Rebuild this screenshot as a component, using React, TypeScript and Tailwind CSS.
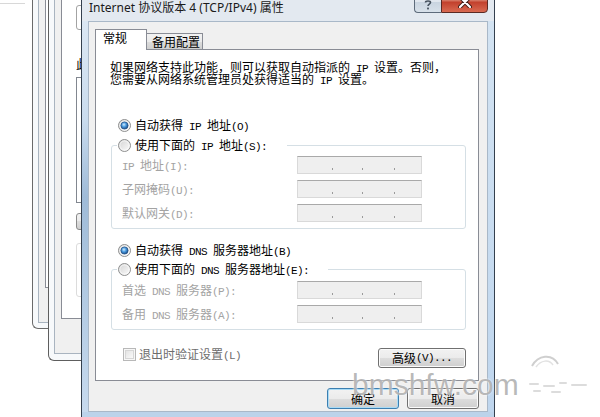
import React from "react";

// ASCII runs are drawn half-width in a mono face, the way the system font sets them
const Txt = ({ s }: { s: string }) => (
  <>
    {s.split(/([\x20-\x7e]+)/).map((part, i) =>
      i % 2 ? (
        <span key={i} className="font-['Liberation_Mono',monospace] text-[11px] leading-[0px] tracking-[-0.6px]">
          {part}
        </span>
      ) : (
        part
      )
    )}
  </>
);

const Radio = ({ on }: { on?: boolean }) => (
  <svg width="13" height="13" viewBox="0 0 13 13" className="shrink-0">
    <circle cx="6.5" cy="6.5" r="6" fill="url(#radioFace)" stroke="#8e8f8f" />
    <circle cx="6.5" cy="6.5" r="4.6" fill="none" stroke="#ffffff" strokeOpacity="0.6" />
    {on && <circle cx="6.5" cy="6.5" r="3.6" fill="url(#radioDot)" stroke="#1b4c84" strokeWidth="0.7" />}
  </svg>
);

const CheckBox = () => (
  <svg width="13" height="13" viewBox="0 0 13 13" className="shrink-0">
    <rect x="0.5" y="0.5" width="12" height="12" fill="#f7f7f7" stroke="#b8b8b8" />
    <rect x="2.5" y="2.5" width="8" height="8" fill="url(#checkFace)" stroke="#d6d6d6" />
  </svg>
);

const RadioRow = ({ on, label }: { on?: boolean; label: string }) => (
  <div className="flex h-4 items-center gap-[4px] leading-[16px] text-black">
    <Radio on={on} />
    <span className="whitespace-nowrap">
      <Txt s={label} />
    </span>
  </div>
);

// disabled four-part address box
const IpBox = () => (
  <div className="flex h-[18px] w-[125px] items-start border border-[#d9d9d9] border-t-[#a9a9a9] bg-[#efefef] pt-[11px]">
    <span className="w-[34px]" />
    <span className="h-[2px] w-px bg-[#9a9a9a]" />
    <span className="w-[29px]" />
    <span className="h-[2px] w-px bg-[#9a9a9a]" />
    <span className="w-[31px]" />
    <span className="h-[2px] w-px bg-[#9a9a9a]" />
  </div>
);

const IpRow = ({ label }: { label: string }) => (
  <div className="flex h-[18px] items-center">
    <span className="w-[175px] whitespace-nowrap leading-[16px] text-[#a3a3a3]">
      <Txt s={label} />
    </span>
    <IpBox />
  </div>
);

const Group = ({ label, pr, rowsTop, children }: { label: string; pr: string; rowsTop: string; children: React.ReactNode }) => (
  <div className="w-[355px] rounded-[3px] border border-[#d5dfe5] pb-[6px]">
    <div className={`-mt-[9px] ml-[5px] w-fit bg-white pl-px ${pr}`}>
      <RadioRow label={label} />
    </div>
    <div className={`flex flex-col gap-[6px] pl-[10px] ${rowsTop}`}>{children}</div>
  </div>
);

const btn =
  "flex items-center justify-center rounded-[3px] border leading-none text-black bg-[linear-gradient(#f2f2f2,#ebebeb_50%,#dddddd_50%,#cfcfcf)]";

export default function App() {
  return (
    <div className="relative h-[417px] w-[600px] overflow-hidden bg-white font-['Noto_Sans_CJK_SC',sans-serif] text-[12px]">
      <svg width="0" height="0" className="absolute">
        <defs>
          <linearGradient id="radioFace" x1="0" y1="0" x2="1" y2="1">
            <stop offset="0" stopColor="#d2d2d2" />
            <stop offset="1" stopColor="#fdfdfd" />
          </linearGradient>
          <radialGradient id="radioDot" cx="0.42" cy="0.38" r="0.65">
            <stop offset="0" stopColor="#d4ecfc" />
            <stop offset="0.45" stopColor="#4b9de2" />
            <stop offset="1" stopColor="#19477f" />
          </radialGradient>
          <linearGradient id="checkFace" x1="0" y1="0" x2="1" y2="1">
            <stop offset="0" stopColor="#e2e2e2" />
            <stop offset="1" stopColor="#fbfbfb" />
          </linearGradient>
        </defs>
      </svg>

      <div className="absolute left-0 top-[3px] h-px w-[25px] bg-[#d8d8d8]" />

      {/* rear window */}
      <div className="absolute left-[32px] top-[-20px] h-[349px] w-[160px] rounded-bl-[6px] border-b border-l border-[#6a6a6a] bg-[#f7f9fb] pb-[5px] pl-[5px]">
        <div className="h-full border-b border-l border-[#a9b4c0] bg-[#f0f0f0] pb-[34px] pl-[6px]">
          <div className="h-full border-b border-l border-[#898c95] bg-white" />
        </div>
      </div>

      {/* connection properties window */}
      <div className="absolute left-[48px] top-[-20px] h-[381px] w-[220px] rounded-bl-[6px] border-b border-l border-[#5e5e5e] bg-[#f7f9fb] pb-[6px] pl-[5px]">
        <div className="h-full border-b border-l border-[#a9b4c0] bg-[#f0f0f0] pb-[34px] pl-[6px]">
          <div className="flex h-full flex-col items-start border-b border-l border-[#898c95] bg-white pl-[14px] pt-[25px]">
            <div className="h-[25px] w-[200px] rounded-[3px] border border-[#a3a3a3]" />
            <span className="mt-[27px] whitespace-nowrap leading-[13px] text-black">此连接使用下列项目(O):</span>
            <div className="mt-[7px] h-[126px] w-[200px] border border-[#828790]" />
            <div className={`${btn} mt-[10px] h-[17px] w-[80px] border-[#8a8a8a]`} />
            <div className="mt-[13px] h-[54px] w-[200px] rounded-[3px] border border-[#dcdcdc]" />
          </div>
        </div>
      </div>

      {/* TCP/IPv4 properties dialog */}
      <div className="absolute left-[81px] top-[-10px] flex w-[414px] flex-col border border-[#34404e] bg-[#c6daee]">
        <div className="flex h-[30px] items-start justify-between bg-[#e3e9f0] pl-[7px] pr-[6px]">
          <span className="mt-[9px] whitespace-nowrap font-['Noto_Sans','Noto_Sans_CJK_SC',sans-serif] text-[12px] leading-[16px] text-[#1a1a1a]">
            Internet 协议版本 4 (TCP/IPv4) 属性
          </span>
          <div className="flex">
            <div className="flex h-[22px] w-[27px] items-end justify-center rounded-bl-[4px] border border-r-0 border-[#5d6b7b] bg-[linear-gradient(#eef2f6,#dfe6ee_50%,#c9d4e0_50%,#d8e1ea)] pb-[2px]">
              <svg width="8" height="10" viewBox="0 0 8 10">
                <path d="M1.5 2.5 C1.5 0.5 6.5 0.5 6.5 2.5 C6.5 4 4 4.2 4 6" fill="none" stroke="#46525f" strokeWidth="1.6" />
                <rect x="3.1" y="7.6" width="1.8" height="1.8" fill="#46525f" />
              </svg>
            </div>
            <div className="flex h-[22px] w-[47px] items-center justify-center rounded-br-[4px] border border-[#5a2a24] bg-[linear-gradient(#e5a593,#d2705c_45%,#c2402c_50%,#d86a52)]">
              <svg width="14" height="12" viewBox="0 0 14 12">
                <path d="M2 1 L12 11 M12 1 L2 11" stroke="#3e1a14" strokeWidth="4" strokeLinecap="round" />
                <path d="M2 1 L12 11 M12 1 L2 11" stroke="#ffffff" strokeWidth="2.2" strokeLinecap="round" />
              </svg>
            </div>
          </div>
        </div>

        <div className="flex">
          <div className="w-[6px] bg-[linear-gradient(#dbe7f3,#cadcee_25%,#9fbbd8_45%,#aac4de_60%,#c7daee)]" />
          <div className="flex h-[391px] w-[400px] flex-col border border-[#a9b8c8] bg-[#f0f0f0] pl-[6px] pr-[8px] pt-[7px]">
            {/* tabs */}
            <div className="flex h-[20px] items-end">
              <div className="relative z-10 -mb-px h-[21px] w-[52px] border border-b-0 border-[#898c95] bg-white pl-[7px] leading-[16px] text-black">
                常规
              </div>
              <div className="h-[16px] w-[56px] border-r border-t border-[#898c95] bg-[linear-gradient(#f2f2f2,#ebebeb_50%,#dddddd_50%,#cfcfcf)] pl-[5px] leading-[16px] text-black">
                备用配置
              </div>
            </div>

            <div className="flex h-[332px] w-[384px] flex-col items-start border border-[#898c95] bg-white px-[15px] pt-[11px]">
              <p className="-ml-px whitespace-nowrap leading-[12px] text-black">
                <Txt s="如果网络支持此功能，则可以获取自动指派的 IP 设置。否则，" />
                <br />
                <Txt s="您需要从网络系统管理员处获得适当的 IP 设置。" />
              </p>

              <div className="mt-[32px] pl-[7px]">
                <RadioRow on label="自动获得 IP 地址(O)" />
              </div>
              <div className="mt-[12px]">
                <Group label="使用下面的 IP 地址(S):" pr="pr-[20px]" rowsTop="mt-[3px]">
                  <IpRow label="IP 地址(I):" />
                  <IpRow label="子网掩码(U):" />
                  <IpRow label="默认网关(D):" />
                </Group>
              </div>

              <div className="mt-[13px] pl-[7px]">
                <RadioRow on label="自动获得 DNS 服务器地址(B)" />
              </div>
              <div className="mt-[11px]">
                <Group label="使用下面的 DNS 服务器地址(E):" pr="pr-[19px]" rowsTop="mt-[4px]">
                  <IpRow label="首选 DNS 服务器(P):" />
                  <IpRow label="备用 DNS 服务器(A):" />
                </Group>
              </div>

              <div className="mt-[16px] flex w-[355px] items-start justify-between">
                <div className="flex h-4 items-center gap-[3px] pl-[12px] leading-[16px] text-[#6d6d6d]">
                  <CheckBox />
                  <span className="whitespace-nowrap">
                    <Txt s="退出时验证设置(L)" />
                  </span>
                </div>
                <button className={`${btn} mt-[2px] h-[20px] w-[88px] border-[#707070] shadow-[inset_0_0_0_1px_#fbfbfb]`}>
                  <Txt s="高级(V)..." />
                </button>
              </div>
            </div>

            <div className="mt-[7px] flex justify-end gap-[8px]">
              <button className={`${btn} h-[21px] w-[72px] border-[#3c7fb1] shadow-[inset_0_0_0_1px_#a9dbf6]`}>确定</button>
              <button className={`${btn} h-[21px] w-[72px] border-[#707070] shadow-[inset_0_0_0_1px_#fbfbfb]`}>取消</button>
            </div>
          </div>
          <div className="w-[6px] bg-[linear-gradient(#d3e3f2,#bfd6ee)]" />
        </div>
        <div className="h-[8px] bg-[#bcd3ea]" />
      </div>

      {/* site mark */}
      <span className="absolute left-[352px] top-[370px] font-['Liberation_Sans',sans-serif] text-[30px] leading-none text-[#9a9a9a]/70 [text-shadow:0_0_2px_#ffffff]">
        bmshfw.com
      </span>
      <svg className="absolute left-[522px] top-[350px]" width="72" height="48" viewBox="0 0 72 48">
        <path d="M10 16 C 16 5, 30 3, 36 14" fill="none" stroke="#cfcfcf" strokeWidth="2" />
        <path d="M14 17 C 19 10, 27 9, 31 15" fill="none" stroke="#e2e2e2" strokeWidth="1.5" />
        <path d="M8 34 h8 M22 36 h10 M38 33 h6 M50 35 h14 M12 41 h6 M30 42 h8" stroke="#dcdcdc" strokeWidth="2" strokeLinecap="round" />
      </svg>
    </div>
  );
}
